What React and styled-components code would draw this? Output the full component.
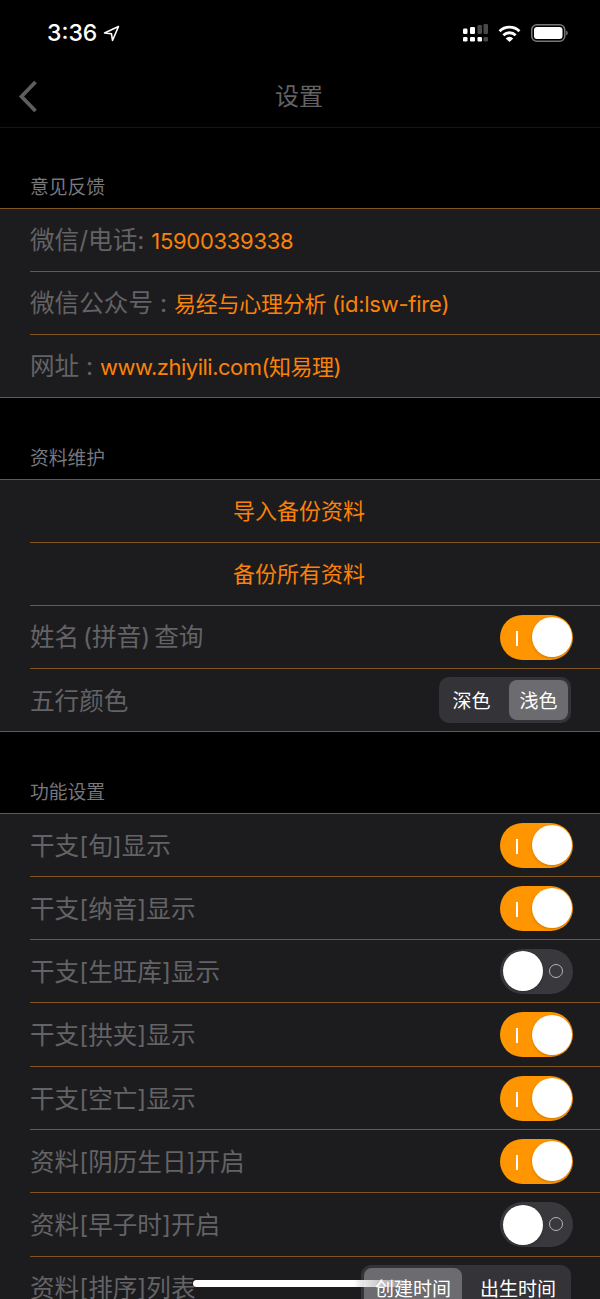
import styled, { createGlobalStyle } from "styled-components";

const GlobalStyle = createGlobalStyle`
  html, body {
    margin: 0;
    padding: 0;
    background: #000;
  }
  body {
    font-family: "Inter", "Noto Sans CJK SC", sans-serif;
  }
`;

const Screen = styled.div`
  position: relative;
  width: 600px;
  height: 1299px;
  overflow: hidden;
  background: #000;
`;

const StatusBar = styled.div`
  height: 64px;
  box-sizing: border-box;
  display: flex;
  align-items: center;
  justify-content: space-between;
  padding: 2px 32px 0 47px;
  color: #fff;
`;
const TimeWrap = styled.div`
  display: flex;
  align-items: center;
  gap: 6px;
  font-size: 23px;
  font-weight: 500;
`;
const StatusIcons = styled.div`
  display: flex;
  align-items: center;
  gap: 10px;
`;

const NavBar = styled.div`
  position: relative;
  height: 64px;
  box-sizing: border-box;
  display: flex;
  align-items: center;
  justify-content: center;
  padding-bottom: 3px;
  border-bottom: 1px solid #141414;
`;
const NavTitle = styled.div`
  font-size: 24px;
  margin-left: -2px;
  color: #636366;
`;
const BackBtn = styled.svg`
  position: absolute;
  left: 18px;
  top: 16px;
`;

const SectionTitle = styled.div`
  height: ${(p) => (p.$first ? 80 : 81)}px;
  box-sizing: border-box;
  display: flex;
  align-items: flex-end;
  padding: 0 0 8px 30px;
  font-size: 18.8px;
  line-height: 24px;
  color: #77777c;
`;
const Group = styled.div`
  background: #1c1c1e;
  border-top: 1px solid #80541f;
`;
const Row = styled.div`
  height: ${(p) => (p.$tall ? 64 : 63)}px;
  box-sizing: border-box;
  margin-left: ${(p) => (p.$last ? 0 : 30)}px;
  padding-left: ${(p) => (p.$last ? 30 : 0)}px;
  padding-right: 27px;
  display: flex;
  align-items: center;
  justify-content: space-between;
  color: #636366;
  border-bottom: 1px solid #80541f;
  white-space: nowrap;
`;
const Label = styled.span`
  font-size: 24.6px;
  padding-bottom: ${(p) => p.$lift || 4}px;
  word-spacing: ${(p) => p.$ws || 0}px;
`;
const ActionRow = styled(Row)`
  justify-content: center;
  padding-right: 32px;
`;
const ActionLabel = styled.span`
  font-size: 22px;
  padding-bottom: 4px;
  color: #fa8209;
`;
const Accent = styled.span`
  color: #fa8209;
  font-size: 22px;
  word-spacing: 0;
  letter-spacing: ${(p) => p.$ls}px;
`;

const SwitchTrack = styled.div`
  position: relative;
  width: 73px;
  height: 45px;
  border-radius: 23px;
  background: ${(p) => (p.$on ? "#ff9500" : "#39393d")};
`;
const Knob = styled.div`
  position: absolute;
  top: 2.5px;
  left: ${(p) => (p.$on ? 31.5 : 2.5)}px;
  width: 40px;
  height: 40px;
  border-radius: 50%;
  background: #fff;
  box-shadow: 0 1px 3px rgba(0, 0, 0, 0.2);
`;
const OnMark = styled.div`
  position: absolute;
  left: 16px;
  top: 16px;
  width: 1.5px;
  height: 15px;
  background: #fff;
`;
const OffMark = styled.div`
  position: absolute;
  right: 10px;
  top: 15px;
  width: 12px;
  height: 12px;
  border: 1.5px solid #b4b4b6;
  border-radius: 50%;
`;

const Segment = styled.div`
  display: flex;
  align-items: center;
  height: 46px;
  box-sizing: border-box;
  padding: 3px;
  border-radius: 10px;
  background: #343438;
  margin-right: 2px;
`;
const SegItem = styled.div`
  width: ${(p) => p.$w}px;
  height: 40px;
  display: flex;
  align-items: center;
  justify-content: center;
  border-radius: 8px;
  font-size: 19px;
  padding: 0 ${(p) => p.$padR || 0}px 1px ${(p) => p.$padL || 0}px;
  box-sizing: border-box;
  color: #fff;
  background: ${(p) => (p.$active ? "#6c6c70" : "transparent")};
`;

const HomeBar = styled.div`
  position: absolute;
  left: 193px;
  top: 1280px;
  width: 212px;
  height: 7px;
  border-radius: 4px;
  background: linear-gradient(90deg, #fff 0%, #fff 76%, rgba(255, 255, 255, 0.25) 100%);
`;

const Switch = ({ on }) => (
  <SwitchTrack $on={on}>
    {on ? <OnMark /> : <OffMark />}
    <Knob $on={on} />
  </SwitchTrack>
);

const featureRows = [
  ["干支[旬]显示", true],
  ["干支[纳音]显示", true],
  ["干支[生旺库]显示", false],
  ["干支[拱夹]显示", true, true],
  ["干支[空亡]显示", true],
  ["资料[阴历生日]开启", true],
  ["资料[早子时]开启", false, true],
];

export default function App() {
  return (
    <Screen>
      <GlobalStyle />
      <StatusBar>
        <TimeWrap>
          3:36
          <svg width="17" height="17" viewBox="0 0 17 17" fill="none" stroke="#fff" strokeWidth="1.6" strokeLinejoin="round">
            <path d="M15.500 1.500 1.500 8 8.500 8.800 9.500 15.500Z" />
          </svg>
        </TimeWrap>
        <StatusIcons>
          <svg width="25" height="18" viewBox="0 0 25 18">
            <g fill="#fff">
              <rect x="0" y="4.5" width="4.5" height="5.5" rx="1.2" />
              <rect x="7" y="3" width="5" height="7" rx="1.2" />
              <rect x="0" y="13" width="4.5" height="4.5" rx="1.2" />
              <rect x="7" y="13" width="5" height="4.5" rx="1.2" />
              <rect x="14.5" y="13" width="4.5" height="4.5" rx="1.2" />
            </g>
            <g fill="#48484a">
              <rect x="14.5" y="1" width="4.5" height="9" rx="1.2" />
              <rect x="20.5" y="0" width="4.5" height="10" rx="1.2" />
              <rect x="20.5" y="13" width="4.5" height="4.5" rx="1.2" />
            </g>
          </svg>
          <svg width="23" height="17" viewBox="0 0 24 18" fill="none" stroke="#fff" strokeWidth="3">
            <path d="M1.500 6.500a15 15 0 0 1 21 0" />
            <path d="M5.500 10.800a9.500 9.500 0 0 1 13 0" />
            <path d="M12 18 8 14.200a5.600 5.600 0 0 1 8 0Z" fill="#fff" stroke="none" />
          </svg>
          <svg width="37" height="18" viewBox="0 0 37 18">
            <rect x="0.75" y="0.75" width="33" height="16.5" rx="5" fill="none" stroke="#77777a" strokeWidth="1.5" />
            <rect x="3" y="3" width="28.5" height="12" rx="3" fill="#fff" />
            <path d="M35.200 6.500v5a2.800 2.800 0 0 0 1.600-2.500 2.800 2.800 0 0 0-1.600-2.500Z" fill="#77777a" />
          </svg>
        </StatusIcons>
      </StatusBar>

      <NavBar>
        <BackBtn width="20" height="34" viewBox="0 0 20 34" fill="none" stroke="#5e5e60" strokeWidth="3.8">
          <path d="M17.500 2 3.500 16.500l14 14.500" />
        </BackBtn>
        <NavTitle>设置</NavTitle>
      </NavBar>

      <SectionTitle $first>意见反馈</SectionTitle>
      <Group>
        <Row>
          <Label $lift={5}>
            微信/电话: <Accent $ls={-0.3}>15900339338</Accent>
          </Label>
        </Row>
        <Row>
          <Label>
            微信公众号 : <Accent $ls={-0.25}>易经与心理分析 (id:lsw-fire)</Accent>
          </Label>
        </Row>
        <Row $last>
          <Label>
            网址 : <Accent $ls={-0.5}>www.zhiyili.com(知易理)</Accent>
          </Label>
        </Row>
      </Group>

      <SectionTitle>资料维护</SectionTitle>
      <Group>
        <ActionRow>
          <ActionLabel>导入备份资料</ActionLabel>
        </ActionRow>
        <ActionRow>
          <ActionLabel>备份所有资料</ActionLabel>
        </ActionRow>
        <Row>
          <Label $ws={-3}>姓名 (拼音) 查询</Label>
          <Switch on />
        </Row>
        <Row $last>
          <Label $lift={2}>五行颜色</Label>
          <Segment>
            <SegItem $w={67} $padR={8}>
              深色
            </SegItem>
            <SegItem $w={59} $active>
              浅色
            </SegItem>
          </Segment>
        </Row>
      </Group>

      <SectionTitle>功能设置</SectionTitle>
      <Group>
        {featureRows.map(([label, on, tall]) => (
          <Row key={label} $tall={tall}>
            <Label $lift={3}>{label}</Label>
            <Switch on={on} />
          </Row>
        ))}
        <Row>
          <Label>资料[排序]列表</Label>
          <Segment>
            <SegItem $w={98} $active>
              创建时间
            </SegItem>
            <SegItem $w={106} $padL={6}>
              出生时间
            </SegItem>
          </Segment>
        </Row>
      </Group>

      <HomeBar />
    </Screen>
  );
}
